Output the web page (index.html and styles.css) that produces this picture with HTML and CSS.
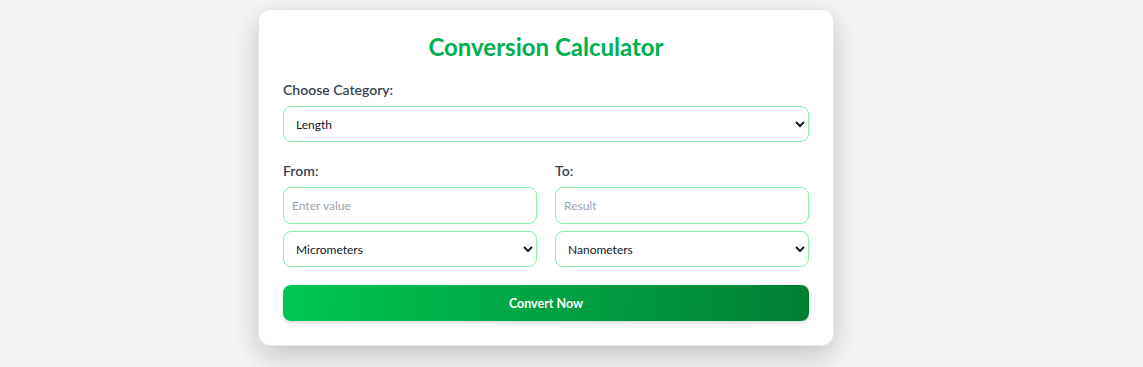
FILE: index.html
```html
<!DOCTYPE html>
<html lang="en">
<head>
  <meta charset="UTF-8" />
  <meta name="viewport" content="width=device-width, initial-scale=1.0" />
  <title>Conversion Calculator</title>
  <link rel="stylesheet" href="styles.css">
</head>
<body>
  <div class="card">
    <h1>Conversion Calculator</h1>

    <label class="label" for="category">Choose Category:</label>
    <select id="category" class="field">
      <option>Length</option>
    </select>

    <div class="cols">
      <div class="col">
        <label class="label" for="from">From:</label>
        <input id="from" class="field" type="text" placeholder="Enter value">
        <select class="field">
          <option>Micrometers</option>
        </select>
      </div>
      <div class="col">
        <label class="label" for="to">To:</label>
        <input id="to" class="field" type="text" placeholder="Result" readonly>
        <select class="field">
          <option>Nanometers</option>
        </select>
      </div>
    </div>

    <button class="btn">Convert Now</button>
  </div>
</body>
</html>
```

FILE: styles.css
```css
/* ===== General ===== */
html, body {
  min-height: 100vh;
}
body {
  margin: 0;
  background: #f3f4f6;
  font-family: Lato, "Noto Sans", sans-serif;
  color: #374151;
}
/* ===== Card ===== */
.card {
  width: 526px;
  margin: 9px 0 0 258px;
  padding: 23px 24px 24px;
  background: #fff;
  border: 1px solid #e5e7eb;
  border-radius: 12px;
  box-shadow: 0 10px 30px rgba(0,0,0,0.2);
  display: flex;
  flex-direction: column;
}
.card h1 {
  margin: 0 0 19px;
  text-align: center;
  font-size: 24px;
  line-height: 28px;
  color: #00b050;
  font-weight: 700;
}
.label {
  display: block;
  font-size: 14px;
  font-weight: 600;
  line-height: 20px;
  margin-bottom: 6px;
  color: #374151;
}
/* ===== Fields ===== */
.field {
  box-sizing: border-box;
  width: 100%;
  height: 36px;
  padding: 0 8px;
  border: 1px solid #86efac;
  border-radius: 8px;
  background: #fff;
  font-family: inherit;
  font-size: 12px;
  color: #111827;
  outline: none;
}
input.field {
  height: 37px;
}
.field::placeholder {
  color: #9ca3af;
}
.cols {
  display: flex;
  gap: 18px;
  margin-top: 19px;
}
.col {
  flex: 1;
  display: flex;
  flex-direction: column;
  gap: 7px;
}
.col .label {
  margin-bottom: -1px;
}
/* ===== Button ===== */
.btn {
  margin-top: 18px;
  height: 36px;
  border: none;
  border-radius: 8px;
  background: linear-gradient(100deg, #00c853, #007e33);
  color: #fff;
  font-family: inherit;
  font-size: 12.5px;
  font-weight: 700;
  box-shadow: 0 2px 4px rgba(0,0,0,0.15);
  cursor: pointer;
}
```
